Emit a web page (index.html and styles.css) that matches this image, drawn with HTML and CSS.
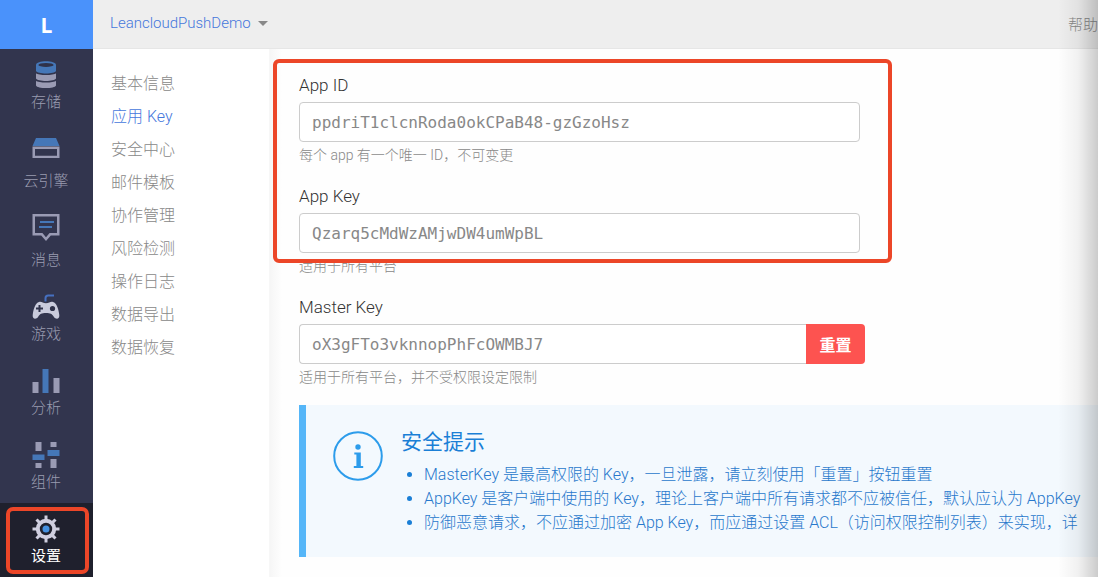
FILE: index.html
```
<!DOCTYPE html>
<html lang="zh-CN">
<head>
<meta charset="utf-8">
<title>LeancloudPushDemo - 应用 Key</title>
<link rel="stylesheet" href="styles.css">
</head>
<body>
<div class="app">
  <aside class="sidebar">
    <a class="brand" href="#">L</a>
    <nav class="nav">
      <a class="nav-item" href="#">
        <svg class="icon" viewBox="0 0 28 28">
          <path class="light" d="M4 12.2c2 2.4 18 2.4 20 0v5.3c-1 3.3-19 3.3-20 0zM4 19.8c2 2.4 18 2.4 20 0v4.6c-1 3.5-19 3.5-20 0z"/>
          <path class="blue" d="M4 4c0-5 20-5 20 0v6c-1 3.3-19 3.3-20 0z"/>
          <ellipse class="hole" cx="14" cy="3.9" rx="7.6" ry="2"/>
        </svg>
        <span>存储</span>
      </a>
      <a class="nav-item" href="#">
        <svg class="icon icon-tall" viewBox="0 0 28 33">
          <path class="blue" d="M4 3h20l3.5 8H.5z"/>
          <path class="light" fill-rule="evenodd" d="M.5 11.6h27V23H.5zM3 14v6.8h22V14z"/>
        </svg>
        <span>云引擎</span>
      </a>
      <a class="nav-item" href="#">
        <svg class="icon icon-tall" viewBox="0 0 28 33">
          <path class="light" fill-rule="evenodd" d="M.5 0h27v21.5h-8.7L14 27l-4.800-5.500H.5zM3 2.500V19h7.400l3.600 4.200 3.600-4.200H25V2.500z"/>
          <path class="blue" d="M8 7h14v2H8zM7 12h13v2H7z"/>
        </svg>
        <span>消息</span>
      </a>
      <a class="nav-item" href="#">
        <svg class="icon" viewBox="0 0 28 28">
          <path class="blue-line" d="M13.500 8.500V5.200q0-2.700 2.700-2.700H22"/>
          <path class="pale" d="M7 9c2.500-.8 3.800 1.200 7 1.200S18.500 8.200 21 9c3.500 1 5.500 6.500 6.300 13 .5 4-3.300 5-5.500 1.700C20 21 18.500 20 14 20s-6 1-7.800 3.700C4 27 .2 26 .7 22 1.500 15.500 3.500 10 7 9z"/>
          <path class="hole" d="M6.500 12h2v2.500H11v2H8.500V19h-2v-2.500H4v-2h2.500z"/>
          <circle class="hole" cx="20.500" cy="15.500" r="2.600"/>
        </svg>
        <span>游戏</span>
      </a>
      <a class="nav-item" href="#">
        <svg class="icon" viewBox="0 0 28 28">
          <path class="light" d="M.5 15h6v11h-6zM21.500 11h6v15h-6z"/>
          <path class="blue" d="M10.500 2h6v24h-6z"/>
        </svg>
        <span>分析</span>
      </a>
      <a class="nav-item" href="#">
        <svg class="icon" viewBox="0 0 28 28">
          <path class="light" d="M3.500 1h6v9h-6zM3.500 22h6v5h-6zM18.500 1h6v5h-6zM18.500 18h6v9h-6z"/>
          <path class="blue" d="M.5 13.500h12v5.500H.5zM15.500 9h12v6h-12z"/>
        </svg>
        <span>组件</span>
      </a>
      <a class="nav-item nav-item-active" href="#">
        <svg class="icon" viewBox="0 0 28 28">
          <circle class="ring" cx="14" cy="14" r="8.200"/>
          <path class="teeth" d="M14 .5V5M14 23v4.500M.5 14H5M23 14h4.500M4.500 4.500l3.100 3.100M20.400 20.400l3.100 3.100M4.500 23.500l3.100-3.100M20.400 7.600l3.100-3.100"/>
          <circle class="core" cx="14" cy="14" r="3.500"/>
        </svg>
        <span>设置</span>
      </a>
    </nav>
  </aside>

  <div class="page">
    <header class="topbar">
      <button class="app-switch" type="button">LeancloudPushDemo<span class="caret"></span></button>
      <a class="help-link" href="#">帮助</a>
    </header>
    <div class="body">
      <nav class="subnav">
        <a href="#">基本信息</a>
        <a class="current" href="#">应用 Key</a>
        <a href="#">安全中心</a>
        <a href="#">邮件模板</a>
        <a href="#">协作管理</a>
        <a href="#">风险检测</a>
        <a href="#">操作日志</a>
        <a href="#">数据导出</a>
        <a href="#">数据恢复</a>
      </nav>
      <main class="content">
        <div class="marked">
          <div class="field">
            <label for="app-id">App ID</label>
            <input id="app-id" type="text" readonly value="ppdriT1clcnRoda0okCPaB48-gzGzoHsz">
            <p class="hint">每个 app 有一个唯一 ID，不可变更</p>
          </div>
          <div class="field">
            <label for="app-key">App Key</label>
            <input id="app-key" type="text" readonly value="Qzarq5cMdWzAMjwDW4umWpBL">
            <p class="hint">适用于所有平台</p>
          </div>
        </div>
        <div class="field field-group">
          <label for="master-key">Master Key</label>
          <div class="group">
            <input id="master-key" type="text" readonly value="oX3gFTo3vknnopPhFcOWMBJ7">
            <button class="reset" type="button">重置</button>
          </div>
          <p class="hint">适用于所有平台，并不受权限设定限制</p>
        </div>
        <section class="notice">
          <svg class="info" viewBox="0 0 50 50">
            <circle cx="25" cy="25" r="23.800"/>
            <path d="M21.300 21.500h6.500v13.500h2.400v2.100h-9.400v-2.100h2.600V23.600h-2.100z"/>
            <ellipse class="dot" cx="25" cy="16" rx="2.700" ry="2.700"/>
          </svg>
          <div class="notice-text">
            <h2>安全提示</h2>
            <ul>
              <li>MasterKey 是最高权限的 Key，一旦泄露，请立刻使用「重置」按钮重置</li>
              <li>AppKey 是客户端中使用的 Key，理论上客户端中所有请求都不应被信任，默认应认为 AppKey</li>
              <li>防御恶意请求，不应通过加密 App Key，而应通过设置 ACL（访问权限控制列表）来实现，详</li>
            </ul>
          </div>
        </section>
      </main>
    </div>
  </div>
</div>
</body>
</html>
```
FILE: styles.css
```
* { box-sizing: border-box; }

body {
  margin: 0;
  background: #fefefe;
  color: #333;
  font-family: Roboto, "Noto Sans CJK SC", sans-serif;
  font-weight: 300;
  font-size: 16px;
  overflow: hidden;
}

a { color: inherit; text-decoration: none; }
button, input { font: inherit; margin: 0; }

.app {
  display: flex;
  min-height: 100vh;
  position: relative;
}

/* shade along the right edge of the window */
.app::after {
  content: "";
  position: absolute;
  top: 0;
  right: 0;
  bottom: 0;
  width: 40px;
  background: linear-gradient(to right, rgba(0,0,0,0), rgba(0,0,0,.05) 50%, rgba(0,0,0,.2));
  pointer-events: none;
}

.sidebar {
  flex: 0 0 93px;
  background: #32354e;
}

.brand {
  display: flex;
  align-items: center;
  justify-content: center;
  height: 49px;
  background: #4a92fb;
  color: #fff;
  font-family: "Open Sans", sans-serif;
  font-size: 21px;
  font-weight: 700;
}

.nav-item {
  display: flex;
  flex-direction: column;
  align-items: center;
  gap: 3px;
  padding: 12px 1px 11px 0;
  color: #9a9cb0;
  font-size: 15px;
  line-height: 20px;
}

.icon { display: block; width: 28px; height: 28px; }
.icon-tall { height: 33px; }
.light { fill: #9a9bb4; }
.pale { fill: #c9cbdc; }
.blue { fill: #4577b8; }
.hole { fill: #2f324a; }
.blue-line { fill: none; stroke: #4670c0; stroke-width: 2; }

.nav-item-active {
  position: relative;
  background: #1f202d;
  color: #fff;
  font-weight: 400;
}
.nav-item-active::after {
  content: "";
  position: absolute;
  inset: 4px 4px 3px 6px;
  border: 4px solid #ec4628;
  border-radius: 7px;
}
.ring { fill: none; stroke: #d0cfe0; stroke-width: 4; }
.teeth { fill: none; stroke: #d0cfe0; stroke-width: 3; }
.core { fill: #4590df; }

.page {
  flex: 1;
  min-width: 0;
  display: flex;
  flex-direction: column;
}

.topbar {
  display: flex;
  align-items: center;
  justify-content: space-between;
  height: 49px;
  padding: 0 0 2px 17px;
  background: #eee;
  border-bottom: 1px solid #e6e6e6;
}

.app-switch {
  display: flex;
  align-items: center;
  gap: 7px;
  padding: 0;
  border: 0;
  background: none;
  color: #4577dc;
  font-size: 15px;
}
.caret {
  border: 5px solid transparent;
  border-top-color: #888;
  border-bottom: 0;
}
.help-link { color: #888; font-size: 15px; }

.body { flex: 1; display: flex; }

.subnav {
  flex: 0 0 177px;
  display: flex;
  flex-direction: column;
  padding: 18px;
  background: #fff;
  border-right: 1px solid #f7f7f7;
  color: #888;
  line-height: 33px;
}
.subnav .current { color: #4577dc; }

.content {
  flex: 1;
  min-width: 0;
  padding: 25px 0 20px 29px;
  background: linear-gradient(to right, #f6f6f6, #fefefe 12px);
}

.marked { position: relative; max-width: 561px; }
.marked::after {
  content: "";
  position: absolute;
  inset: -15px -32px 13px -26px;
  border: 4px solid #ec4628;
  border-radius: 6px;
  pointer-events: none;
}

.field { max-width: 561px; margin-bottom: 20px; }
.field-group { max-width: 566px; margin-bottom: 18px; }
.field label {
  display: block;
  margin-bottom: 6px;
  font-size: 17px;
  line-height: 22px;
}
.field input {
  display: block;
  width: 100%;
  min-width: 0;
  height: 40px;
  padding: 0 12px;
  border: 1px solid #ccc;
  border-radius: 4px;
  outline: 0;
  background: #fff;
  color: #888;
  font-family: "DejaVu Sans Mono", monospace;
  font-size: 16px;
  font-weight: 400;
}
.hint {
  margin: 3px 0 0;
  color: #888;
  font-size: 14px;
  line-height: 20px;
}

.group { display: flex; }
.group input { flex: 1; border-right: 0; border-radius: 4px 0 0 4px; }
.reset {
  flex: 0 0 59px;
  padding: 0;
  border: 0;
  border-radius: 0 4px 4px 0;
  background: #fd5350;
  color: #fff;
  font-size: 16px;
  font-weight: 700;
}

.notice {
  display: flex;
  gap: 18px;
  padding: 23px 0 22px 27px;
  border-left: 7px solid #55b6f8;
  background: #f3f9fe;
  color: #2878cc;
  overflow: hidden;
}
.info { flex: none; width: 50px; height: 50px; margin-top: 3px; fill: #2c9ceb; }
.info circle { fill: none; stroke: #2c9ceb; stroke-width: 2; }
.notice h2 {
  margin: 0 0 7px;
  color: #1a7fd6;
  font-size: 21px;
  font-weight: 400;
  line-height: 28px;
}
.notice ul {
  margin: 0;
  padding-left: 23px;
  line-height: 24px;
  white-space: nowrap;
}
.notice li::marker { color: #1a7fd6; }
```
